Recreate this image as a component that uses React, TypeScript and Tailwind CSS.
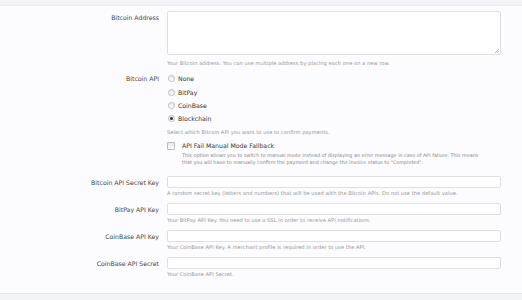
import React from "react";

const font = { fontFamily: '"DejaVu Sans", Verdana, sans-serif' };

function Radio({ label, checked }: { label: string; checked?: boolean }) {
  return (
    <div className="flex h-[13.33px] items-center">
      <span className="ml-[1px] flex h-[7px] w-[7px] items-center justify-center rounded-full border border-[#b9bcc2] bg-gradient-to-b from-[#e4e6ea] to-[#ffffff]">
        {checked && <span className="h-[3px] w-[3px] rounded-full bg-[#333]" />}
      </span>
      <span className="ml-[3px] text-[6.2px] text-[#333]">{label}</span>
    </div>
  );
}

function Label({ children, className = "" }: { children: React.ReactNode; className?: string }) {
  return <div className={`text-right text-[6.2px] leading-[9px] text-[#444] ${className}`}>{children}</div>;
}

function Hint({ children, className = "" }: { children: React.ReactNode; className?: string }) {
  return <div className={`text-[5.2px] leading-[8px] text-[#999] ${className}`}>{children}</div>;
}

function InputRow({ label, hint, className = "" }: { label: string; hint: string; className?: string }) {
  return (
    <div className={`grid grid-cols-[159px_334px] gap-x-[8px] ${className}`}>
      <Label className="pt-[2px]">{label}</Label>
      <div>
        <div className="h-[12px] rounded-[2px] border border-[#dcdfe4] bg-white" />
        <Hint className="mt-[1px]">{hint}</Hint>
      </div>
    </div>
  );
}

export default function App() {
  return (
    <div className="h-[300px] w-[522px] overflow-hidden bg-[#f3f4f8]" style={font}>
      <div className="h-[5px]" />
      <div className="h-[289px] border-t border-b border-[#e6e9ef] bg-[#fcfcfe]">
        {/* Bitcoin Address */}
        <div className="grid grid-cols-[159px_334px] gap-x-[8px] pt-[5px]">
          <Label className="pt-[1.5px]">Bitcoin Address</Label>
          <div>
            <div className="relative h-[44px] rounded-[2px] border border-[#dcdfe4] bg-white">
              <svg className="absolute bottom-[1px] right-[1px]" width="5" height="5" viewBox="0 0 5 5">
                <path d="M1 5 L5 1 M3 5 L5 3" stroke="#999" strokeWidth="0.7" />
              </svg>
            </div>
            <Hint className="mt-[4px]">
              Your Bitcoin address. You can use multiple address by placing each one on a new row.
            </Hint>
          </div>
        </div>

        {/* Bitcoin API */}
        <div className="mt-[5.3px] grid grid-cols-[159px_334px] gap-x-[8px]">
          <Label className="pt-[2px]">Bitcoin API</Label>
          <div>
            <Radio label="None" />
            <Radio label="BitPay" />
            <Radio label="CoinBase" />
            <Radio label="Blockchain" checked />
            <Hint className="mt-[2px]">Select which Bitcoin API you want to use to confirm payments.</Hint>
            <div className="mt-[4.5px] flex h-[12px] items-center">
              <span className="h-[8px] w-[8px] rounded-[1px] border border-[#b9bcc2] bg-gradient-to-b from-[#e4e6ea] to-[#ffffff]" />
              <span className="ml-[7px] text-[6.2px] text-[#333]">API Fail Manual Mode Fallback</span>
            </div>
            <div className="pl-[15px] text-[4.85px] leading-[7.3px] text-[#888]">
              This option allows you to switch to manual mode instead of displaying an error message in case of API failure. This means
              <br />
              that you will have to manually confirm the payment and change the invoice status to "Completed".
            </div>
          </div>
        </div>

        <InputRow
          className="mt-[9.7px]"
          label="Bitcoin API Secret Key"
          hint="A random secret key (letters and numbers) that will be used with the Bitcoin APIs. Do not use the default value."
        />
        <InputRow
          className="mt-[6px]"
          label="BitPay API Key"
          hint="Your BitPay API Key. You need to use a SSL in order to receive API notifications."
        />
        <InputRow
          className="mt-[6px]"
          label="CoinBase API Key"
          hint="Your CoinBase API Key. A merchant profile is required in order to use the API."
        />
        <InputRow className="mt-[6px]" label="CoinBase API Secret" hint="Your CoinBase API Secret." />
      </div>
    </div>
  );
}
